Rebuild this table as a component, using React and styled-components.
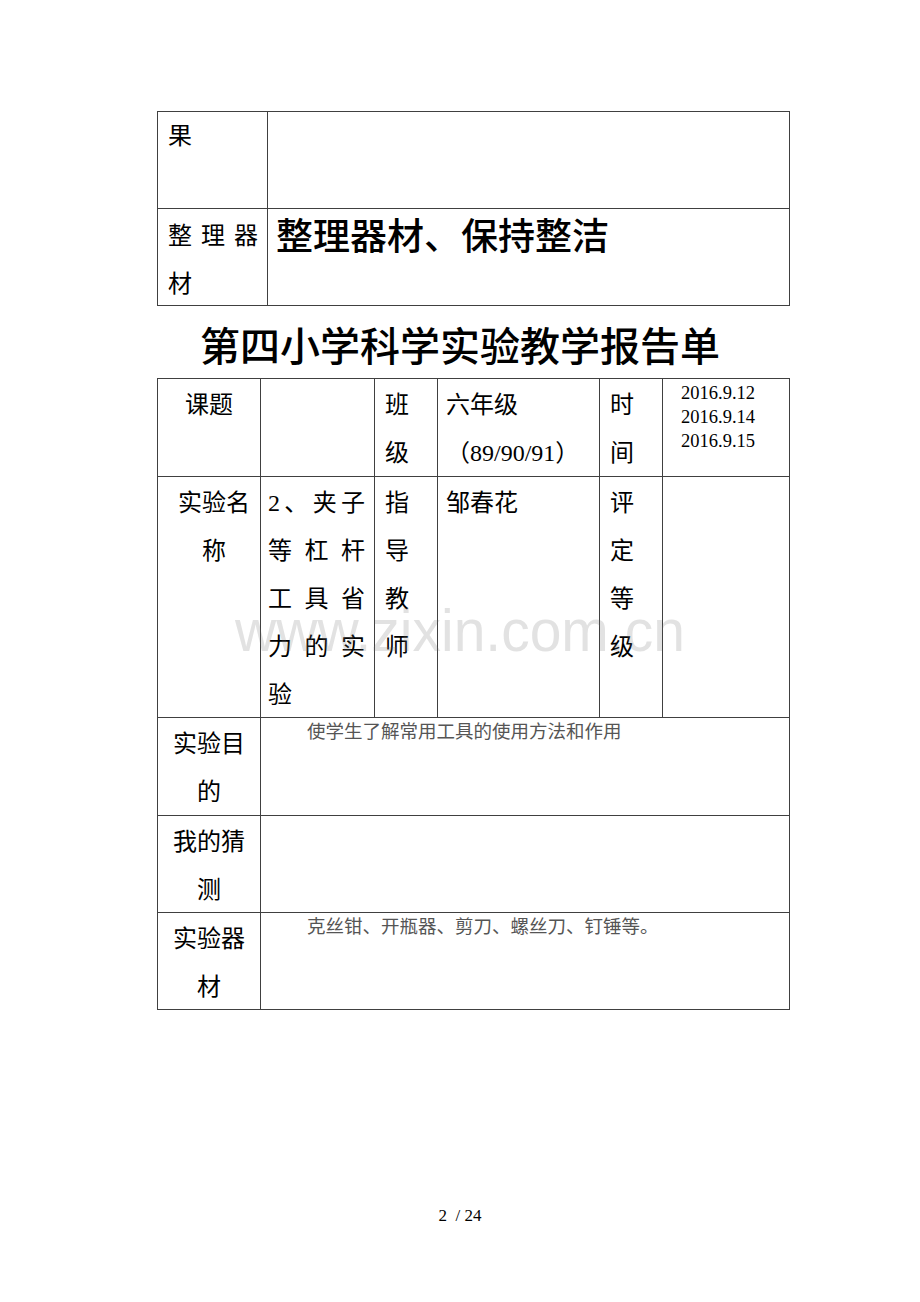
import React from "react";
import styled, { createGlobalStyle } from "styled-components";

const GlobalStyle = createGlobalStyle`
  html, body { margin: 0; padding: 0; background: #fff; }
  body { font-family: "Liberation Serif", "Noto Sans CJK SC", serif; color: #000; }
`;

const CJK = `"Liberation Serif", "Noto Sans CJK SC", serif`;
const LINE = "#404040";

const Page = styled.div`
  position: relative;
  width: 920px;
  height: 1302px;
  box-sizing: border-box;
  padding-top: 111px;
  display: flex;
  flex-direction: column;
  overflow: hidden;
  font-family: ${CJK};
`;

const Grid = styled.div`
  margin-left: 157px;
  width: 633px;
  box-sizing: border-box;
  display: grid;
  grid-template-columns: ${(p) => p.$cols};
  grid-template-rows: ${(p) => p.$rows};
  border-left: 1px solid ${LINE};
  border-top: 1px solid ${LINE};
`;

const Cell = styled.div`
  box-sizing: border-box;
  min-width: 0;
  border-right: 1px solid ${LINE};
  border-bottom: 1px solid ${LINE};
  grid-column: ${(p) => (p.$span ? `span ${p.$span}` : "auto")};
  padding: ${(p) => p.$pad || "2px 8px 0 8px"};
  font-size: 24px;
  line-height: 48px;
  text-align: ${(p) => (p.$center ? "center" : "left")};
`;

const JustLine = styled.div`
  display: flex;
  justify-content: space-between;
  height: 48px;
  line-height: 48px;
`;

const BigText = styled.div`
  font-family: "Noto Sans CJK SC", sans-serif;
  font-weight: 500;
  font-size: 37px;
  line-height: 48px;
  white-space: nowrap;
`;

const Title = styled.h1`
  margin: 0;
  padding: 6px 0 2px;
  height: 72px;
  box-sizing: border-box;
  text-align: center;
  font-family: "Noto Sans CJK SC", sans-serif;
  font-weight: 500;
  font-size: 40px;
  line-height: 64px;
`;

const Dates = styled.div`
  font-family: "Liberation Serif", serif;
  font-size: 18.5px;
  line-height: 24px;
  padding-left: 10px;
`;

const Note = styled.p`
  margin: 0;
  padding-top: 1px;
  font-size: 18.5px;
  line-height: 24px;
  color: #555;
  text-indent: 37px;
`;

const Watermark = styled.div`
  position: absolute;
  left: 0;
  right: 0;
  top: 601px;
  text-align: center;
  font-family: "Liberation Sans", Arial, sans-serif;
  font-size: 60px;
  line-height: 60px;
  color: rgba(110, 110, 110, 0.2);
  transform: scaleX(0.95);
  pointer-events: none;
  user-select: none;
`;

const PageNumber = styled.div`
  margin-top: auto;
  margin-bottom: 74px;
  text-align: center;
  font-family: "Liberation Serif", serif;
  font-size: 17px;
  line-height: 24px;
  white-space: pre;
`;

const Spread = ({ text }) => (
  <JustLine>
    {Array.from(text).map((c, i) => (
      <span key={i}>{c}</span>
    ))}
  </JustLine>
);

export default function App() {
  return (
    <>
      <GlobalStyle />
      <Page>
        <Grid $cols="110px 522px" $rows="97px 97px">
          <Cell $pad="0 9px 0 10px">果</Cell>
          <Cell />
          <Cell $pad="3px 9px 0 10px">
            <Spread text="整理器" />
            <div>材</div>
          </Cell>
          <Cell $pad="1px 9px 0 8px">
            <BigText>整理器材、保持整洁</BigText>
          </Cell>
        </Grid>

        <Title>第四小学科学实验教学报告单</Title>

        <Grid
          $cols="103px 114px 63px 162px 63px 127px"
          $rows="98px 241px 98px 97px 97px"
        >
          <Cell $center $pad="2px 6px 0 6px">课题</Cell>
          <Cell />
          <Cell $pad="2px 10px 0 10px">班级</Cell>
          <Cell $pad="2px 6px 0 8px">
            <div>六年级</div>
            <div>（89/90/91）</div>
          </Cell>
          <Cell $pad="2px 10px 0 10px">时间</Cell>
          <Cell $pad="2px 4px 0 8px">
            <Dates>
              2016.9.12
              <br />
              2016.9.14
              <br />
              2016.9.15
            </Dates>
          </Cell>

          <Cell $center $pad="2px 2px 0 12px">实验名称</Cell>
          <Cell $pad="2px 9px 0 7px">
            <Spread text="2、夹子" />
            <Spread text="等杠杆" />
            <Spread text="工具省" />
            <Spread text="力的实" />
            <div>验</div>
          </Cell>
          <Cell $pad="2px 10px 0 10px">指导教师</Cell>
          <Cell $pad="2px 6px 0 8px">邹春花</Cell>
          <Cell $pad="2px 10px 0 10px">评定等级</Cell>
          <Cell />

          <Cell $center $pad="2px 6px 0 6px">实验目的</Cell>
          <Cell $span={5} $pad="1px 9px 0 9px">
            <Note>使学生了解常用工具的使用方法和作用</Note>
          </Cell>

          <Cell $center $pad="2px 6px 0 6px">我的猜测</Cell>
          <Cell $span={5} />

          <Cell $center $pad="2px 6px 0 6px">实验器材</Cell>
          <Cell $span={5} $pad="1px 9px 0 9px">
            <Note>克丝钳、开瓶器、剪刀、螺丝刀、钉锤等。</Note>
          </Cell>
        </Grid>

        <PageNumber>2  / 24</PageNumber>
        <Watermark>www.zixin.com.cn</Watermark>
      </Page>
    </>
  );
}
